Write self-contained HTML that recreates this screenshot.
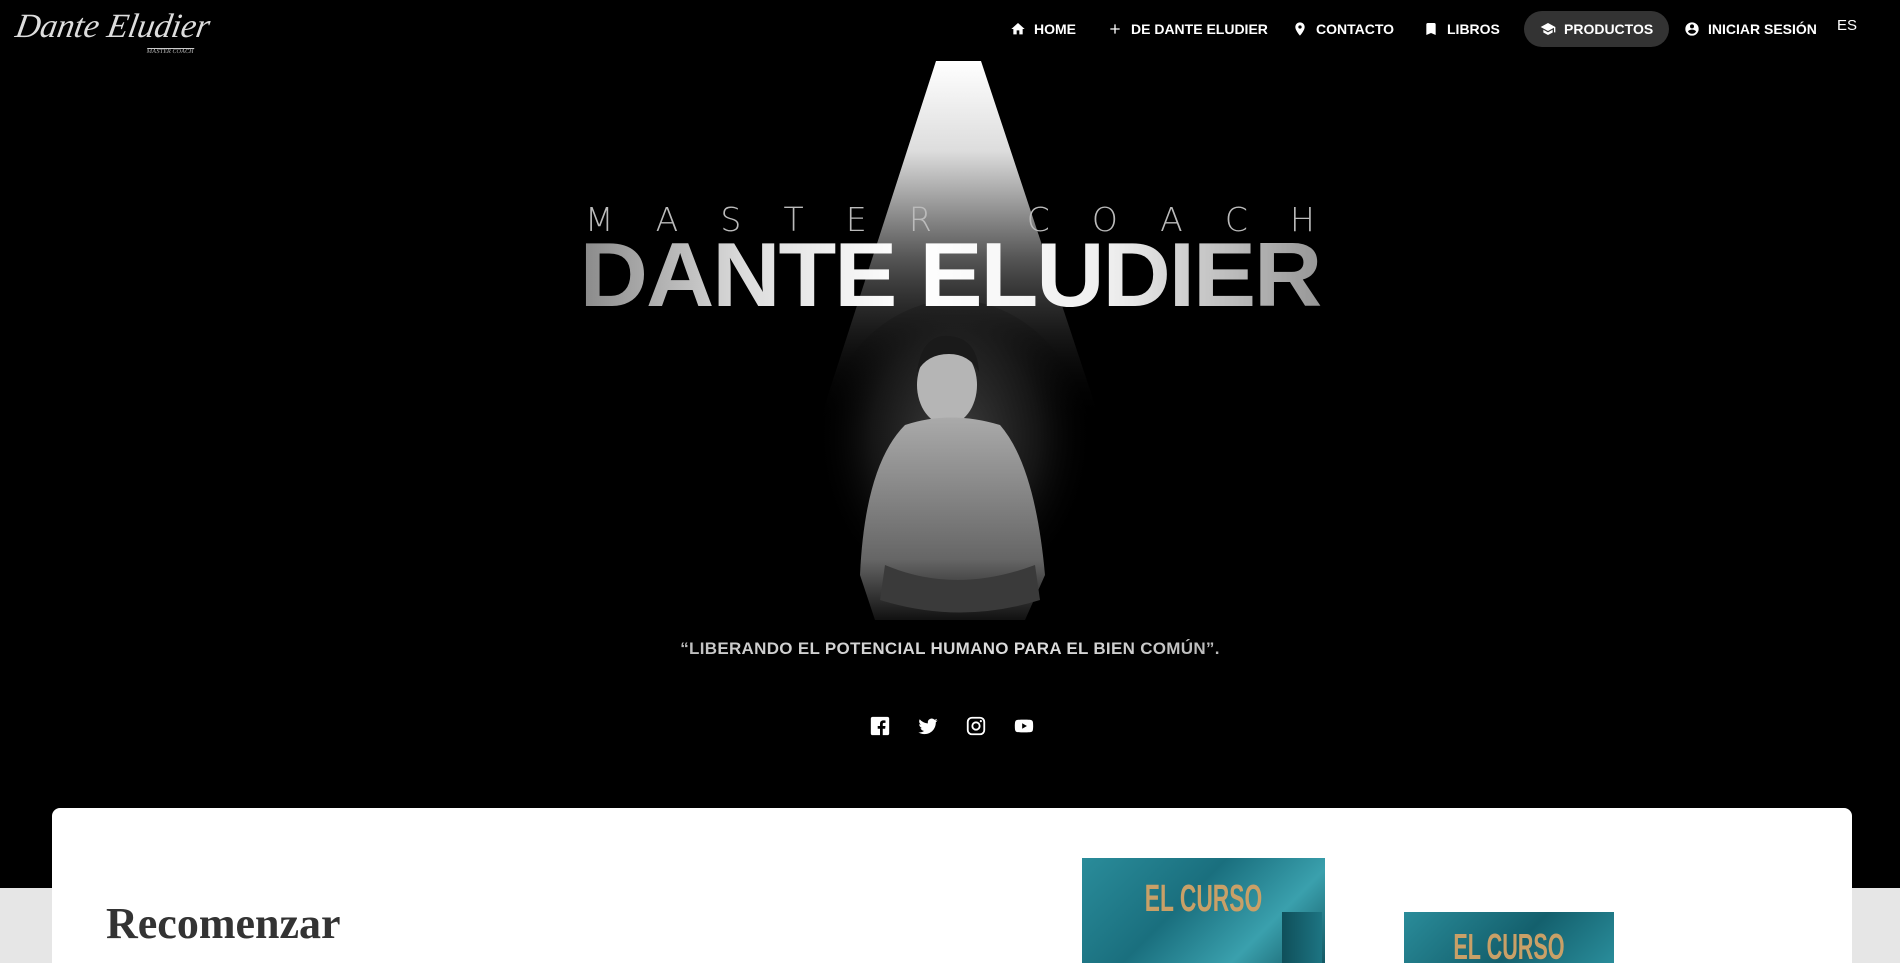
<!DOCTYPE html>
<html><head><meta charset="utf-8"><style>
*{margin:0;padding:0;box-sizing:border-box}
html,body{width:1900px;height:963px;overflow:hidden;background:#e6e6e6;font-family:"Liberation Sans",sans-serif;position:relative}
.hero{position:absolute;left:0;top:0;width:1900px;height:888px;background:#000;overflow:hidden}
.cone{position:absolute;left:0;top:0;width:1900px;height:888px}
.logo{position:absolute;left:16px;top:8px;font-family:"Liberation Serif",serif;font-style:italic;color:#ddd;font-size:34px;letter-spacing:0px;transform:skewX(-10deg)}
.logo small{position:absolute;left:135px;top:40px;font-size:6px;font-style:normal;color:#bbb;border-top:1px solid #ccc;letter-spacing:0}
.nav{position:absolute;top:11px;left:0;width:1900px;height:36px}
.nav a{position:absolute;top:0;height:36px;line-height:36px;color:#fff;font-weight:bold;font-size:14px;text-decoration:none;white-space:nowrap}
.nav svg{width:16px;height:16px;vertical-align:-3px;margin-right:8px;fill:#fff}
.pill{background:#333;border-radius:18px;padding:0 16px}
.mc{position:absolute;left:585px;top:200px;width:730px;display:flex;justify-content:space-between;font-size:33px}
.mc span{font-family:"DejaVu Sans",sans-serif;font-weight:200;color:#bbb}
.de{position:absolute;left:560px;top:224px;width:780px;text-align:center;font-size:91px;font-weight:bold;letter-spacing:-2px;background:linear-gradient(90deg,#777 0%,#ddd 25%,#fff 45%,#eee 70%,#888 100%);-webkit-background-clip:text;background-clip:text;-webkit-text-fill-color:transparent;transform:scaleX(1.04)}
.quote{position:absolute;left:0;width:1900px;top:639px;text-align:center;font-size:17px;font-weight:bold;letter-spacing:.3px;background:linear-gradient(90deg,#666 0%,#888 30%,#ccc 38%,#ddd 55%,#aaa 68%,#666 80%);-webkit-background-clip:text;background-clip:text;-webkit-text-fill-color:transparent}
.soc{position:absolute;top:715px;width:22px;height:22px;fill:#fff}
.card{position:absolute;left:52px;top:808px;width:1800px;height:155px;background:#fff;border-radius:8px 8px 0 0;overflow:hidden}
.card h1{position:absolute;left:54px;top:90px;font-family:"Liberation Serif",serif;font-weight:bold;font-size:44px;color:#333}
</style></head><body>
<div class="hero">
<svg class="cone" viewBox="0 0 1900 888">
<defs>
<linearGradient id="g" x1="0" y1="0" x2="0" y2="1"><stop offset="0" stop-color="#fff"/><stop offset=".25" stop-color="#ddd"/><stop offset=".55" stop-color="#555"/><stop offset="1" stop-color="#000" stop-opacity="0"/></linearGradient>
<radialGradient id="p" cx=".5" cy=".4" r=".5"><stop offset="0" stop-color="#666"/><stop offset=".6" stop-color="#222"/><stop offset="1" stop-color="#000" stop-opacity="0"/></radialGradient>
<linearGradient id="sh" x1="0" y1="0" x2="0" y2="1"><stop offset="0" stop-color="#aaa"/><stop offset=".7" stop-color="#666"/><stop offset="1" stop-color="#111"/></linearGradient>
</defs>
<polygon points="936,61 981,61 1100,420 820,420" fill="url(#g)"/>
<ellipse cx="955" cy="470" rx="140" ry="170" fill="url(#p)" opacity=".6"/>
<ellipse cx="947" cy="385" rx="30" ry="40" fill="#b5b5b5"/>
<path d="M917 372 q5 -38 32 -36 q28 2 30 36 q-10-18-30-18 q-22 0-32 18z" fill="#1a1a1a"/>
<path d="M905 425 q45 -15 95 0 q35 40 45 150 l-20 45 h-150 l-15-45 q5-110 45-150z" fill="url(#sh)"/>
<path d="M885 565 q70 30 150 0 l5 35 q-80 25-160 0z" fill="#3a3a3a"/>
</svg>
<div class="logo">Dante Eludier<small>MASTER COACH</small></div>
<div class="nav">
<a style="left:1010px"><svg viewBox="0 0 24 24"><path d="M10 20v-6h4v6h5v-8h3L12 3 2 12h3v8z"/></svg>HOME</a>
<a style="left:1107px"><svg viewBox="0 0 24 24"><path d="M19 13h-6v6h-2v-6H5v-2h6V5h2v6h6z"/></svg>DE DANTE ELUDIER</a>
<a style="left:1292px"><svg viewBox="0 0 24 24"><path d="M12 2C8.1 2 5 5.1 5 9c0 5.2 7 13 7 13s7-7.8 7-13c0-3.9-3.1-7-7-7zm0 9.5a2.5 2.5 0 110-5 2.5 2.5 0 010 5z"/></svg>CONTACTO</a>
<a style="left:1423px"><svg viewBox="0 0 24 24"><path d="M17 3H7c-1.1 0-2 .9-2 2v16l7-3 7 3V5c0-1.1-.9-2-2-2z"/></svg>LIBROS</a>
<a class="pill" style="left:1524px"><svg viewBox="0 0 24 24"><path d="M5 13.2v4L12 21l7-3.8v-4L12 17zM12 3L1 9l11 6 9-4.9V17h2V9z"/></svg>PRODUCTOS</a>
<a style="left:1684px"><svg viewBox="0 0 24 24"><path d="M12 2a10 10 0 100 20 10 10 0 000-20zm0 3a3 3 0 110 6 3 3 0 010-6zm0 14.2a7.2 7.2 0 01-6-3.2c0-2 4-3.1 6-3.1s6 1.1 6 3.1a7.2 7.2 0 01-6 3.2z"/></svg>INICIAR SESIÓN</a>
<a style="left:1837px;font-weight:normal;font-size:15px;top:-3px">ES</a>
</div>
<div class="mc"><span>M</span><span>A</span><span>S</span><span>T</span><span>E</span><span>R</span><span>&nbsp;</span><span>C</span><span>O</span><span>A</span><span>C</span><span>H</span></div>
<div class="de">DANTE ELUDIER</div>
<div class="quote">“LIBERANDO EL POTENCIAL HUMANO PARA EL BIEN COMÚN”.</div>
<svg class="soc" style="left:869px" viewBox="0 0 24 24"><path d="M20 2H4a2 2 0 00-2 2v16a2 2 0 002 2h8v-7h-2.5v-3H12V9.5C12 7 13.5 5.8 15.7 5.8c1 0 2 .1 2.3.2v2.6h-1.6c-1.2 0-1.4.6-1.4 1.4V12h3l-.4 3H15v7h5a2 2 0 002-2V4a2 2 0 00-2-2z"/></svg>
<svg class="soc" style="left:917px" viewBox="0 0 24 24"><path d="M22.5 5.8c-.8.4-1.6.6-2.5.7.9-.5 1.600-1.4 1.9-2.4-.8.5-1.8.9-2.7 1.1a4.3 4.3 0 00-7.3 3.9C8.3 8.9 5.1 7.2 3 4.6c-1.2 2-.6 4.5 1.3 5.8-.7 0-1.4-.2-1.9-.5 0 2.1 1.5 3.9 3.4 4.3-.6.2-1.3.2-1.9.1.5 1.7 2.1 3 4 3A8.6 8.6 0 011.5 19c1.9 1.2 4.2 1.9 6.6 1.9 8 0 12.4-6.6 12.4-12.4v-.6c.8-.6 1.5-1.3 2-2.1z"/></svg>
<svg class="soc" style="left:965px" viewBox="0 0 24 24"><path d="M7.5 2h9A5.5 5.5 0 0122 7.5v9a5.5 5.5 0 01-5.5 5.5h-9A5.5 5.5 0 012 16.5v-9A5.5 5.5 0 017.5 2zm0 2A3.5 3.5 0 004 7.5v9A3.5 3.5 0 007.5 20h9a3.5 3.5 0 003.5-3.5v-9A3.5 3.5 0 0016.5 4zM12 7a5 5 0 110 10 5 5 0 010-10zm0 2a3 3 0 100 6 3 3 0 000-6zm5.3-3.5a1.2 1.2 0 110 2.4 1.2 1.2 0 010-2.4z"/></svg>
<svg class="soc" style="left:1013px" viewBox="0 0 24 24"><path d="M21.6 7.2a2.5 2.5 0 00-1.8-1.8C18.2 5 12 5 12 5s-6.2 0-7.8.4A2.5 2.5 0 002.4 7.2C2 8.8 2 12 2 12s0 3.2.4 4.8a2.5 2.5 0 001.8 1.8C5.8 19 12 19 12 19s6.2 0 7.8-.4a2.5 2.5 0 001.8-1.8c.4-1.6.4-4.8.4-4.8s0-3.2-.4-4.8zM10 15V9l5.2 3z"/></svg>
</div>
<div class="card"><h1>Recomenzar</h1>
<div style="position:absolute;left:1030px;top:50px;width:243px;height:120px;background:linear-gradient(135deg,#2a8c9a,#1a6f7e 40%,#3aa0ad 70%,#0d4d58);"></div>
<div style="position:absolute;left:1230px;top:104px;width:40px;height:80px;background:linear-gradient(90deg,#0f4f5a,#1d7482)"></div>
<div style="position:absolute;left:1352px;top:104px;width:210px;height:80px;background:linear-gradient(135deg,#2a8c9a,#14606d 50%,#2f98a6)"></div>
<div style="position:absolute;left:1030px;top:50px;width:243px;text-align:center;color:#c9a067;font-weight:bold;font-size:38px;padding-top:20px;transform:scaleX(.6)">EL CURSO</div>
<div style="position:absolute;left:1352px;top:118px;width:210px;text-align:center;color:#c9a067;font-weight:bold;font-size:36px;transform:scaleX(.6)">EL CURSO</div>
</div>
</body></html>
